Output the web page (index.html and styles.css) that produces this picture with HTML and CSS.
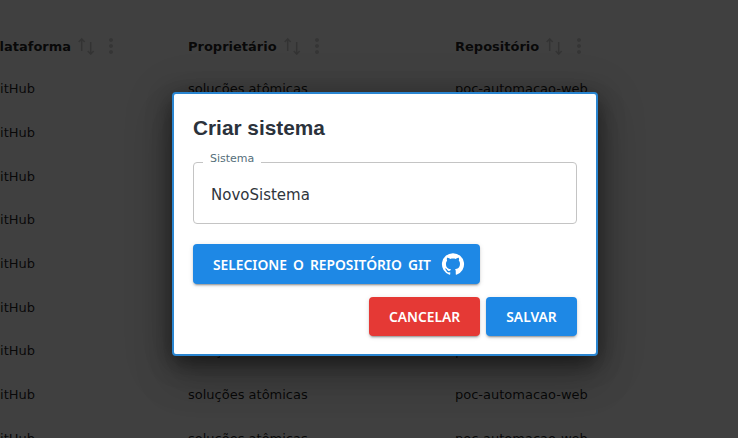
FILE: index.html
```html
<!DOCTYPE html>
<html lang="pt-BR">
<head>
    <meta charset="UTF-8">
    <title>Criar sistema</title>
    <link rel="stylesheet" href="styles.css">
</head>
<body>

    <div class="grid">
        <div class="row head">
            <div class="cell">Plataforma
                <svg class="sort" viewBox="0 0 24 24"><path d="M6.7 17V5M3.7 8l3-3 3 3M15.7 8v12M12.7 17l3 3 3-3"/></svg>
                <svg class="more" viewBox="0 0 24 24"><path d="M12 8c1.1 0 2-.9 2-2s-.9-2-2-2-2 .9-2 2 .9 2 2 2zm0 2c-1.1 0-2 .9-2 2s.9 2 2 2 2-.9 2-2-.9-2-2-2zm0 6c-1.1 0-2 .9-2 2s.9 2 2 2 2-.9 2-2-.9-2-2-2z"/></svg>
            </div>
            <div class="cell">Proprietário
                <svg class="sort" viewBox="0 0 24 24"><path d="M6.7 17V5M3.7 8l3-3 3 3M15.7 8v12M12.7 17l3 3 3-3"/></svg>
                <svg class="more" viewBox="0 0 24 24"><path d="M12 8c1.1 0 2-.9 2-2s-.9-2-2-2-2 .9-2 2 .9 2 2 2zm0 2c-1.1 0-2 .9-2 2s.9 2 2 2 2-.9 2-2-.9-2-2-2zm0 6c-1.1 0-2 .9-2 2s.9 2 2 2 2-.9 2-2-.9-2-2-2z"/></svg>
            </div>
            <div class="cell">Repositório
                <svg class="sort" viewBox="0 0 24 24"><path d="M6.7 17V5M3.7 8l3-3 3 3M15.7 8v12M12.7 17l3 3 3-3"/></svg>
                <svg class="more" viewBox="0 0 24 24"><path d="M12 8c1.1 0 2-.9 2-2s-.9-2-2-2-2 .9-2 2 .9 2 2 2zm0 2c-1.1 0-2 .9-2 2s.9 2 2 2 2-.9 2-2-.9-2-2-2zm0 6c-1.1 0-2 .9-2 2s.9 2 2 2 2-.9 2-2-.9-2-2-2z"/></svg>
            </div>
        </div>
        <div class="row"><div class="cell">GitHub</div><div class="cell">soluções atômicas</div><div class="cell">poc-automacao-web</div></div>
        <div class="row"><div class="cell">GitHub</div><div class="cell">soluções atômicas</div><div class="cell">poc-automacao-web</div></div>
        <div class="row"><div class="cell">GitHub</div><div class="cell">soluções atômicas</div><div class="cell">poc-automacao-web</div></div>
        <div class="row"><div class="cell">GitHub</div><div class="cell">soluções atômicas</div><div class="cell">poc-automacao-web</div></div>
        <div class="row"><div class="cell">GitHub</div><div class="cell">soluções atômicas</div><div class="cell">poc-automacao-web</div></div>
        <div class="row"><div class="cell">GitHub</div><div class="cell">soluções atômicas</div><div class="cell">poc-automacao-web</div></div>
        <div class="row"><div class="cell">GitHub</div><div class="cell">soluções atômicas</div><div class="cell">poc-automacao-web</div></div>
        <div class="row"><div class="cell">GitHub</div><div class="cell">soluções atômicas</div><div class="cell">poc-automacao-web</div></div>
        <div class="row"><div class="cell">GitHub</div><div class="cell">soluções atômicas</div><div class="cell">poc-automacao-web</div></div>
    </div>

    <div class="overlay">
        <div class="dialog">
            <h2>Criar sistema</h2>
            <div class="field">
                <span class="label">Sistema</span>
                <span class="value">NovoSistema</span>
            </div>
            <button class="btn blue git">Selecione o repositório Git
                <svg viewBox="0 0 24 24"><path d="M12 1.27a11 11 0 00-3.48 21.46c.55.09.73-.28.73-.55v-1.84c-3.03.64-3.67-1.46-3.67-1.46-.55-1.29-1.28-1.65-1.28-1.65-.92-.65.1-.65.1-.65 1.1 0 1.73 1.1 1.73 1.1.92 1.65 2.57 1.2 3.21.92a2 2 0 01.64-1.47c-2.47-.27-5.04-1.19-5.04-5.5 0-1.1.46-2.1 1.2-2.84a3.76 3.76 0 010-2.93s.91-.28 3.11 1.1c1.8-.49 3.7-.49 5.5 0 2.1-1.38 3.02-1.1 3.02-1.1a3.76 3.76 0 010 2.93c.83.74 1.2 1.74 1.2 2.94 0 4.21-2.57 5.13-5.04 5.4.45.37.82.92.82 2.02v3.03c0 .27.1.64.73.55A11 11 0 0012 1.27"/></svg>
            </button>
            <div class="actions">
                <button class="btn red">Cancelar</button>
                <button class="btn blue save">Salvar</button>
            </div>
        </div>
    </div>

</body>
</html>
```

FILE: styles.css
```css
body {
    margin: 0;
    height: 438px;
    overflow: hidden;
    background: #fff;
    font-family: "DejaVu Sans", sans-serif;
    color: rgba(0, 0, 0, 0.87);
    position: relative;
}

/* table behind the modal, scrolled a little to the right */
.grid {
    margin-left: -10px;
    padding-top: 25px;
    height: 413px;
    overflow: hidden;
    font-size: 13px;
}
.row {
    display: grid;
    grid-template-columns: 198px 267px 267px;
    height: 43.7px;
    align-items: center;
}
.head {
    font-weight: 700;
    height: 42px;
}
.cell {
    display: flex;
    align-items: center;
    white-space: nowrap;
}
.sort {
    width: 24px;
    height: 24px;
    margin-left: 4px;
    fill: none;
    stroke: rgba(0, 0, 0, 0.2);
    stroke-width: 1.6;
}
.more {
    width: 24px;
    height: 24px;
    fill: rgba(0, 0, 0, 0.18);
}

.overlay {
    position: absolute;
    top: 0;
    left: 0;
    right: 0;
    bottom: 0;
    background: rgba(0, 0, 0, 0.75);
}

.dialog {
    position: absolute;
    top: 92px;
    left: 172px;
    box-sizing: border-box;
    width: 426px;
    height: 264px;
    padding: 0 19px;
    background: #fff;
    border: 2px solid #2a85d0;
    border-radius: 4px;
    display: flex;
    flex-direction: column;
    align-items: flex-start;
    box-shadow: 0 11px 15px -7px rgba(0, 0, 0, 0.2), 0 24px 38px 3px rgba(0, 0, 0, 0.14), 0 9px 46px 8px rgba(0, 0, 0, 0.12), 0 6px 24px rgba(0, 0, 0, 0.4);
}
h2 {
    margin: 22px 0 0;
    font-family: "Liberation Sans", sans-serif;
    font-size: 20.8px;
    line-height: 24px;
    font-weight: 700;
    color: #2b323b;
}

.field {
    position: relative;
    box-sizing: border-box;
    width: 384px;
    height: 62px;
    margin-top: 22px;
    padding: 3px 17px 0;
    border: 1px solid #c4c4c4;
    border-radius: 4px;
    display: flex;
    align-items: center;
}
.label {
    position: absolute;
    top: -11px;
    left: 9px;
    padding: 0 7px;
    background: #fff;
    font-size: 11px;
    line-height: 14px;
    color: #546e7a;
}
.value {
    font-size: 15px;
    color: #2f353c;
}

.btn {
    border: none;
    border-radius: 4px;
    color: #fff;
    font-family: "Noto Sans", sans-serif;
    font-size: 13.8px;
    font-weight: 600;
    text-transform: uppercase;
    box-shadow: 0 3px 1px -2px rgba(0, 0, 0, 0.2), 0 2px 2px 0 rgba(0, 0, 0, 0.14), 0 1px 5px 0 rgba(0, 0, 0, 0.12);
}
.blue {
    background: #1e88e5;
}
.red {
    background: #e53935;
    width: 111px;
    height: 39px;
}
.git {
    width: 287px;
    height: 40px;
    margin-top: 20px;
    padding: 0 15px 0 20px;
    display: flex;
    align-items: center;
    justify-content: space-between;
    word-spacing: 2.5px;
    white-space: nowrap;
}
.git svg {
    width: 24px;
    height: 24px;
    fill: #fff;
}
.save {
    width: 91px;
    height: 39px;
}
.actions {
    align-self: flex-end;
    display: flex;
    gap: 6px;
    margin-top: 13px;
}
```
